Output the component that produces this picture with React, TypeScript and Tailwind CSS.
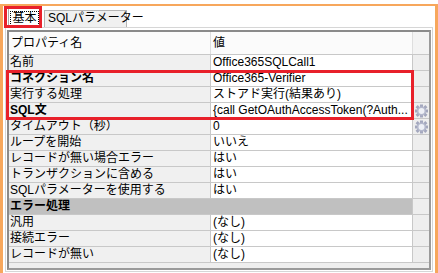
const rows: { label: string; value: string; bold?: boolean; category?: boolean; gear?: boolean }[] = [
  { label: '名前', value: 'Office365SQLCall1' },
  { label: 'コネクション名', value: 'Office365-Verifier', bold: true },
  { label: '実行する処理', value: 'ストアド実行(結果あり)' },
  { label: 'SQL文', value: '{call GetOAuthAccessToken(?Auth...', bold: true, gear: true },
  { label: 'タイムアウト（秒）', value: '0', gear: true },
  { label: 'ループを開始', value: 'いいえ' },
  { label: 'レコードが無い場合エラー', value: 'はい' },
  { label: 'トランザクションに含める', value: 'はい' },
  { label: 'SQLパラメーターを使用する', value: 'はい' },
  { label: 'エラー処理', value: '', bold: true, category: true },
  { label: '汎用', value: '(なし)' },
  { label: '接続エラー', value: '(なし)' },
  { label: 'レコードが無い', value: '(なし)' },
];

function Gear() {
  return (
    <svg width="13" height="14" viewBox="0 0 13 14">
      <g fill="#a3a7bd">
        <rect x="5" y="0.5" width="3" height="3" />
        <rect x="5" y="10.5" width="3" height="3" />
        <rect x="0" y="5.5" width="3" height="3" />
        <rect x="10" y="5.5" width="3" height="3" />
        <rect x="1.2" y="1.7" width="3" height="3" transform="rotate(45 2.7 3.2)" />
        <rect x="8.8" y="1.7" width="3" height="3" transform="rotate(45 10.3 3.2)" />
        <rect x="1.2" y="9.3" width="3" height="3" transform="rotate(45 2.7 10.8)" />
        <rect x="8.8" y="9.3" width="3" height="3" transform="rotate(45 10.3 10.8)" />
      </g>
      <circle cx="6.5" cy="7" r="4.6" fill="#b4b8cc" />
      <circle cx="6.5" cy="7" r="3" fill="#eef0f6" />
    </svg>
  );
}

export default function App() {
  return (
    <div className="relative w-[438px] h-[273px] bg-white overflow-hidden font-['Liberation_Sans','Noto_Sans_CJK_JP',sans-serif] text-[12px] text-black">
      <div className="mt-[4px] h-[269px] border-l-[3px] border-r-[3px] border-t-[2px] border-[#f7a75c] bg-white">
        {/* Tabs */}
        <div className="flex items-end h-[21px] pl-[5px]">
          <div className="w-[33px] h-[19px] bg-white border border-b-0 border-[#a9a9a9] flex items-center justify-center">
            <span className="border border-dotted border-black px-[1px] leading-[13px]">基本</span>
          </div>
          <div className="ml-[3px] w-[83px] h-[17px] bg-[#f0f0f0] border border-b-0 border-[#b4b4b4] pl-[3px] leading-[15px] whitespace-nowrap">
            SQLパラメーター
          </div>
        </div>

        {/* Panel */}
        <div className="mx-[2px] border border-[#d6d6d6] p-[1px] pt-[2px]">
          <div className="border-2 border-t-[#8a8a8a] border-l-[#8a8a8a] border-r-[#9a9a9a] border-b-[#9a9a9a] bg-[#eeeeee]">
            {/* Header */}
            <div className="flex h-[23px] border-b border-[#c8c8c8] bg-[#fbfbfb]">
              <div className="w-[202px] border-r border-[#dedede] pl-[2px] flex items-center">プロパティ名</div>
              <div className="w-[202px] border-r border-[#dedede] pl-[2px] flex items-center">値</div>
              <div className="w-[16px] bg-[#f3f3f3]" />
            </div>
            {rows.map((r) => (
              <div key={r.label} className="flex h-[16px] border-b border-[#c8c8c8]">
                <div
                  className={`w-[202px] pl-[1px] leading-[15px] whitespace-nowrap overflow-hidden ${
                    r.category ? 'bg-[#c0c0c0]' : 'bg-[#f0f0f0] border-r border-[#c8c8c8]'
                  } ${r.bold ? 'font-bold' : ''}`}
                >
                  {r.label}
                </div>
                <div
                  className={`w-[202px] pl-[2px] leading-[15px] whitespace-nowrap overflow-hidden border-r border-[#c8c8c8] ${
                    r.category ? 'bg-[#c0c0c0]' : 'bg-white'
                  }`}
                >
                  {r.value}
                </div>
                <div className="w-[16px] bg-[#eeeeee] flex items-center justify-center">{r.gear && <Gear />}</div>
              </div>
            ))}
            <div className="h-[5px] bg-[#eeeeee]" />
          </div>
        </div>
      </div>

      {/* Red highlight boxes */}
      <div className="absolute left-[4px] top-[6px] w-[38px] h-[22px] border-[3px] border-[#e8202a]" />
      <div className="absolute left-[6px] top-[70px] w-[408px] h-[50px] border-[3px] border-[#e8202a]" />
    </div>
  );
}
